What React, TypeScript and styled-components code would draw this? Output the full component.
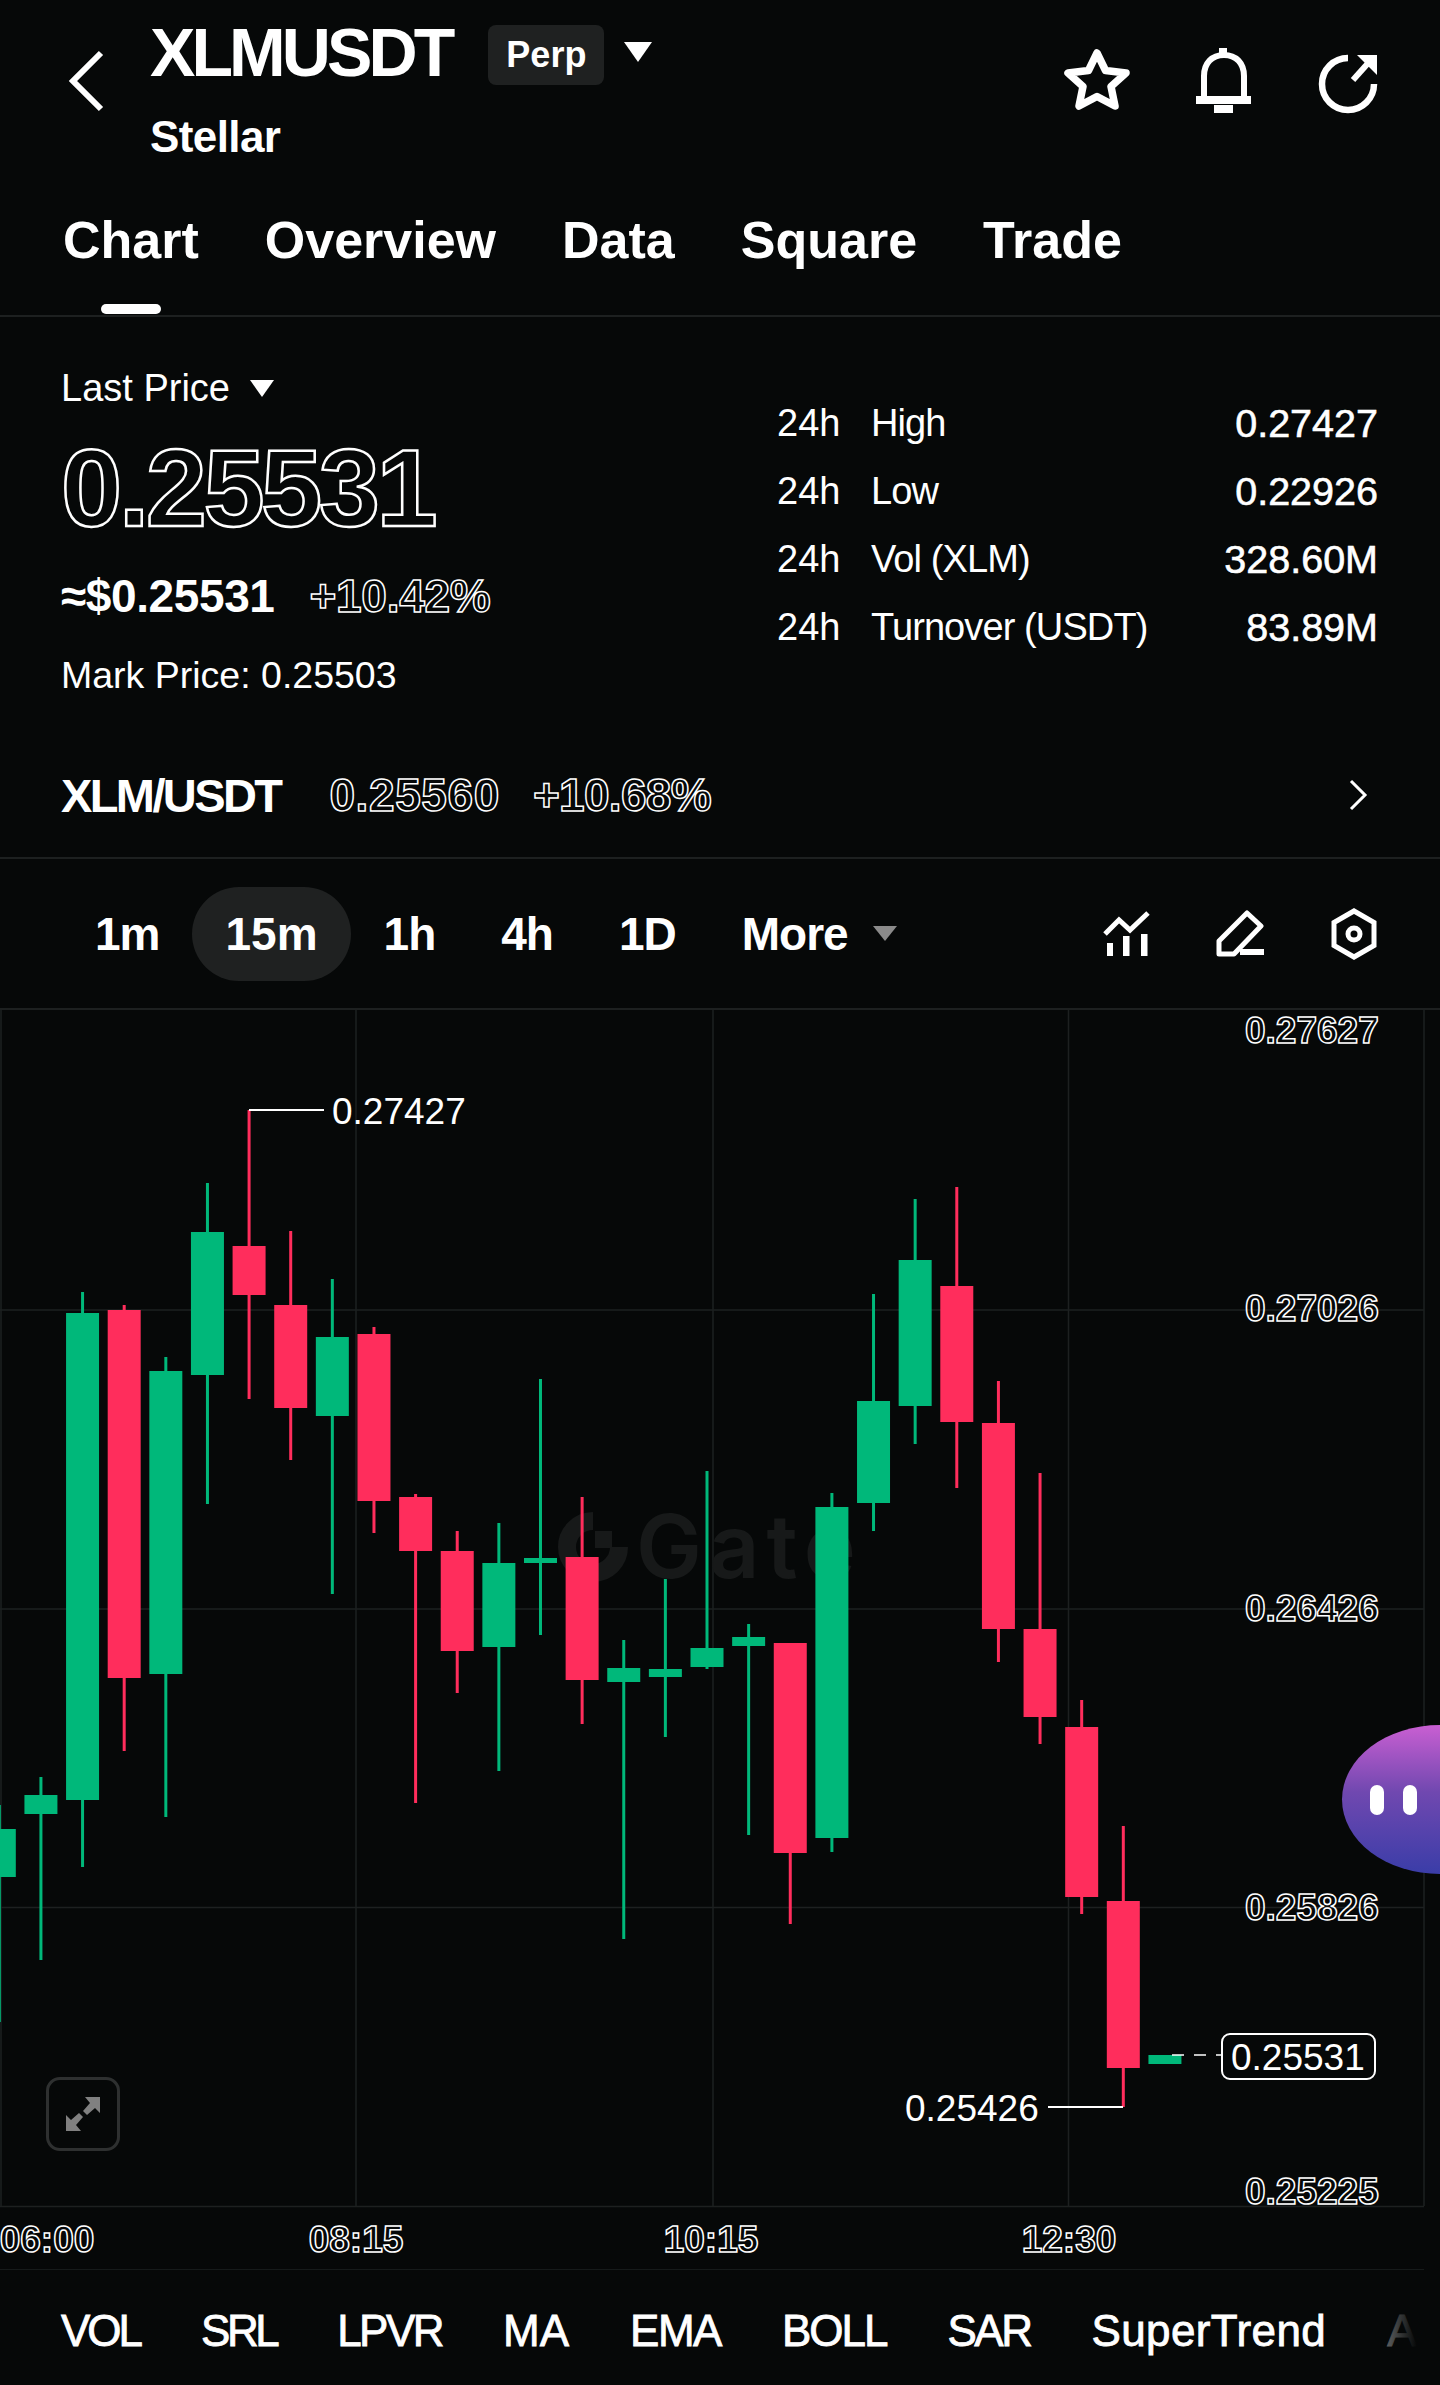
import styled, { createGlobalStyle } from "styled-components";

const BG = "#060808";
const LINE = "#1d2020";
const GREEN = "#00b87a";
const RED = "#ff2d5c";

// wick top, body top, body bottom, wick bottom, is green
const CANDLES: [number, number, number, number, boolean][] = [
  [1805, 1829, 1877, 2022, true],
  [1777, 1795, 1814, 1960, true],
  [1292, 1313, 1800, 1867, true],
  [1305, 1310, 1678, 1751, false],
  [1357, 1371, 1674, 1817, true],
  [1183, 1232, 1375, 1504, true],
  [1110, 1246, 1295, 1399, false],
  [1231, 1305, 1408, 1460, false],
  [1279, 1337, 1416, 1594, true],
  [1327, 1334, 1501, 1533, false],
  [1494, 1497, 1551, 1803, false],
  [1531, 1551, 1651, 1693, false],
  [1523, 1563, 1647, 1771, true],
  [1379, 1558, 1563, 1635, true],
  [1497, 1557, 1680, 1724, false],
  [1640, 1668, 1682, 1939, true],
  [1579, 1669, 1677, 1737, true],
  [1471, 1648, 1667, 1669, true],
  [1624, 1637, 1646, 1835, true],
  [1643, 1643, 1853, 1924, false],
  [1493, 1507, 1838, 1852, true],
  [1294, 1401, 1503, 1531, true],
  [1199, 1260, 1406, 1444, true],
  [1187, 1286, 1422, 1488, false],
  [1381, 1423, 1629, 1662, false],
  [1473, 1629, 1717, 1744, false],
  [1700, 1727, 1897, 1914, false],
  [1826, 1901, 2068, 2107, false],
  [2055, 2055, 2064, 2064, true],
];

const AXIS_PRICES: [string, number][] = [
  ["0.27627", 1029],
  ["0.27026", 1307],
  ["0.26426", 1607],
  ["0.25826", 1906],
  ["0.25225", 2190],
];

const TIMES: [string, number][] = [
  ["06:00", 47],
  ["08:15", 356],
  ["10:15", 711],
  ["12:30", 1069],
];

const STATS = [
  ["High", "0.27427"],
  ["Low", "0.22926"],
  ["Vol (XLM)", "328.60M"],
  ["Turnover (USDT)", "83.89M"],
];

const INTERVALS = ["1m", "15m", "1h", "4h", "1D"];

const INDICATORS: [string, number][] = [
  ["VOL", -3],
  ["SRL", -3.5],
  ["LPVR", -2.5],
  ["MA", 0],
  ["EMA", -1.5],
  ["BOLL", -2],
  ["SAR", -2.5],
  ["SuperTrend", 0.4],
  ["A", 0],
];

export default function App() {
  return (
    <Page>
      <GlobalStyle />
      <Header>
        <TopBar>
          <BackIcon width="36" height="62" viewBox="0 0 36 62">
            <path d="M33 3 L5 31 L33 59" fill="none" stroke="#fff" strokeWidth="6" />
          </BackIcon>
          <TitleBlock>
            <TitleRow>
              <Title>XLMUSDT</Title>
              <Tag>Perp</Tag>
              <Triangle $w={14} $h={20} $color="#fff" />
            </TitleRow>
            <Subtitle>Stellar</Subtitle>
          </TitleBlock>
          <TopIcons>
            <svg width="66" height="64" viewBox="0 0 66 64">
              <path
                d="M33 5 L41.5 22.5 L62 25 L47 38.5 L51 58 L33 48.5 L15 58 L19 38.5 L4 25 L24.5 22.5 Z"
                fill="none"
                stroke="#fff"
                strokeWidth="7.5"
                strokeLinejoin="round"
              />
            </svg>
            <svg width="64" height="66" viewBox="0 0 64 66">
              <path
                d="M13 48 V28 C13 15 21 7 33 7 C45 7 53 15 53 28 V48"
                fill="none"
                stroke="#fff"
                strokeWidth="6"
              />
              <rect x="5" y="48" width="55" height="8" fill="#fff" />
              <rect x="23" y="57" width="19" height="8" fill="#fff" />
              <rect x="28" y="0" width="8" height="8" fill="#fff" />
            </svg>
            <svg width="64" height="66" viewBox="0 0 64 66">
              <path d="M32 10 A26 26 0 1 0 58 36" fill="none" stroke="#fff" strokeWidth="6.5" />
              <path d="M37 32 L54 13" fill="none" stroke="#fff" strokeWidth="6" />
              <path d="M41 7 H61 V27 Z" fill="#fff" />
            </svg>
          </TopIcons>
        </TopBar>
        <Tabs>
          <Tab $active>Chart</Tab>
          <Tab>Overview</Tab>
          <Tab>Data</Tab>
          <Tab>Square</Tab>
          <Tab>Trade</Tab>
        </Tabs>
      </Header>

      <Summary>
        <SummaryTop>
          <PriceColumn>
            <LastPrice>
              Last Price
              <Triangle $w={12} $h={17} $color="#fff" />
            </LastPrice>
            <BigPrice>0.25531</BigPrice>
            <SubPrice>
              <FiatPrice>≈$0.25531</FiatPrice>
              <OutlineChange $spacing={-0.3}>+10.42%</OutlineChange>
            </SubPrice>
            <MarkPrice>Mark Price: 0.25503</MarkPrice>
          </PriceColumn>
          <StatsColumn>
            {STATS.map(([label, value]) => (
              <StatRow key={label}>
                <span>24h</span>
                <StatLabel>{label}</StatLabel>
                <StatValue>{value}</StatValue>
              </StatRow>
            ))}
          </StatsColumn>
        </SummaryTop>
        <SpotRow>
          <SpotName>XLM/USDT</SpotName>
          <OutlineChange $spacing={0.6}>0.25560</OutlineChange>
          <OutlineChange $spacing={-0.7}>+10.68%</OutlineChange>
          <SpotArrow width="20" height="32" viewBox="0 0 20 32">
            <path d="M3 2 L17 16 L3 30" fill="none" stroke="#fff" strokeWidth="3" />
          </SpotArrow>
        </SpotRow>
      </Summary>

      <Toolbar>
        {INTERVALS.map((item) => (
          <Interval key={item} $active={item === "15m"}>
            {item}
          </Interval>
        ))}
        <Interval>
          More
          <Triangle $w={12} $h={15} $color="#8a8a8a" />
        </Interval>
        <ToolIcons>
          <svg width="48" height="48" viewBox="0 0 48 48">
            <path d="M3 24 L17 10 L28 20 L46 3" fill="none" stroke="#fff" strokeWidth="5" />
            <rect x="5" y="33" width="6" height="13" fill="#fff" />
            <rect x="21" y="26" width="6.5" height="20" fill="#fff" />
            <rect x="39" y="24" width="6.5" height="22" fill="#fff" />
          </svg>
          <svg width="48" height="48" viewBox="0 0 48 48">
            <path
              d="M3 44 V31 L31 3 L45 16 L18 44 Z"
              fill="none"
              stroke="#fff"
              strokeWidth="5"
              strokeLinejoin="round"
            />
            <rect x="24" y="39" width="24" height="6" fill="#fff" />
          </svg>
          <svg width="48" height="52" viewBox="0 0 48 52">
            <path
              d="M24 3 L44 14.5 L44 37.5 L24 49 L4 37.5 L4 14.5 Z"
              fill="none"
              stroke="#fff"
              strokeWidth="5"
            />
            <circle cx="24" cy="26" r="6" fill="none" stroke="#fff" strokeWidth="5" />
          </svg>
        </ToolIcons>
      </Toolbar>

      <ChartWrap>
        <svg width="1440" height="1260" viewBox="0 1010 1440 1260" style={{ display: "block" }}>
          {[1310, 1609, 1907.5, 2206.5].map((y) => (
            <line key={y} x1="0" x2="1424" y1={y} y2={y} stroke={LINE} strokeWidth="1.5" />
          ))}
          {[1, 356, 713, 1068.5, 1424].map((x) => (
            <line key={x} x1={x} x2={x} y1="1010" y2="2206" stroke={LINE} strokeWidth="1.5" />
          ))}
          <line x1="0" x2="1424" y1="2270" y2="2270" stroke={LINE} strokeWidth="1.5" />

          <path d="M593 1521 A26 26 0 1 0 619 1547" fill="none" stroke="#171919" strokeWidth="18" />
          <rect x="595" y="1531" width="17" height="17" fill="#171919" />
          <Watermark x="636" y="1578">
            Gate
          </Watermark>

          {CANDLES.map(([wickTop, top, bottom, wickBottom, up], i) => {
            const cx = -0.7 + 41.63 * i;
            const color = up ? GREEN : RED;
            return (
              <g key={i} fill={color}>
                <rect x={cx - 1.5} y={wickTop} width="3" height={wickBottom - wickTop} />
                <rect x={cx - 16.5} y={top} width="33" height={bottom - top} />
              </g>
            );
          })}

          <line x1="249" x2="324" y1="1110" y2="1110" stroke="#fff" strokeWidth="2" />
          <ChartLabel x="332" y="1124">
            0.27427
          </ChartLabel>
          <line x1="1048" x2="1123" y1="2107" y2="2107" stroke="#fff" strokeWidth="2" />
          <ChartLabel x="905" y="2121">
            0.25426
          </ChartLabel>

          <line
            x1="1172"
            x2="1221"
            y1="2055"
            y2="2055"
            stroke="#fff"
            strokeWidth="1.5"
            strokeDasharray="12 10"
          />
          <rect x="1222" y="2034" width="153" height="45" rx="8" fill={BG} stroke="#fff" strokeWidth="2" />
          <ChartLabel x="1231" y="2070">
            0.25531
          </ChartLabel>

          {AXIS_PRICES.map(([label, y]) => (
            <AxisLabel key={label} x="1245" y={y + 14}>
              {label}
            </AxisLabel>
          ))}
          {TIMES.map(([label, x]) => (
            <AxisLabel key={label} x={x} y="2252" textAnchor="middle">
              {label}
            </AxisLabel>
          ))}
        </svg>

        <ExpandButton>
          <svg width="34" height="34" viewBox="0 0 34 34">
            <path d="M19 0 H34 V16 L29 11 L21 18 L17 14 L24 6 Z" fill="#808080" />
            <path d="M15 34 H0 V18 L5 23 L13 16 L17 20 L10 28 Z" fill="#808080" />
          </svg>
        </ExpandButton>
        <Bubble>
          <Eye />
          <Eye />
        </Bubble>
      </ChartWrap>

      <IndicatorRow>
        {INDICATORS.map(([name, spacing]) => (
          <Indicator key={name} $spacing={spacing}>
            {name}
          </Indicator>
        ))}
      </IndicatorRow>
    </Page>
  );
}

const GlobalStyle = createGlobalStyle`
  html, body {
    margin: 0;
    background: ${BG};
  }
  body {
    font-family: "Liberation Sans", Arial, sans-serif;
    color: #fff;
  }
`;

const Page = styled.div`
  width: 1440px;
  height: 2385px;
  overflow: hidden;
  background: ${BG};
`;

const Header = styled.header`
  box-sizing: border-box;
  height: 317px;
  padding-top: 18px;
  border-bottom: 2px solid ${LINE};
`;

const TopBar = styled.div`
  display: flex;
  align-items: flex-start;
  padding: 0 60px 0 68px;
`;

const BackIcon = styled.svg`
  margin: 32px 46px 0 0;
`;

const TitleBlock = styled.div`
  display: flex;
  flex-direction: column;
`;

const TitleRow = styled.div`
  display: flex;
  align-items: center;
  height: 68px;
`;

const Title = styled.h1`
  margin: 0;
  font-size: 68px;
  line-height: 68px;
  font-weight: 700;
  letter-spacing: -3.9px;
`;

const Tag = styled.span`
  margin: 5px 20px 0 37px;
  padding: 0 18px;
  height: 60px;
  line-height: 60px;
  border-radius: 8px;
  background: #1f2121;
  font-size: 36px;
  font-weight: 700;
`;

const Triangle = styled.i<{ $w: number; $h: number; $color: string }>`
  display: inline-block;
  width: 0;
  height: 0;
  border-left: ${(p) => p.$w}px solid transparent;
  border-right: ${(p) => p.$w}px solid transparent;
  border-top: ${(p) => p.$h}px solid ${(p) => p.$color};
`;

const Subtitle = styled.div`
  margin-top: 28px;
  font-size: 44px;
  line-height: 46px;
  font-weight: 700;
  letter-spacing: -0.6px;
`;

const TopIcons = styled.div`
  display: flex;
  gap: 61px;
  align-items: flex-start;
  margin: 30px 0 0 auto;
`;

const Tabs = styled.nav`
  display: flex;
  gap: 66px;
  margin-top: 50px;
  padding-left: 63px;
`;

const Tab = styled.div<{ $active?: boolean }>`
  position: relative;
  height: 104px;
  font-size: 52px;
  line-height: 60px;
  font-weight: 700;

  ${(p) =>
    p.$active &&
    `
    &::after {
      content: "";
      position: absolute;
      left: 50%;
      bottom: 0;
      width: 60px;
      height: 10px;
      margin-left: -30px;
      border-radius: 5px;
      background: #fff;
    }
  `}
`;

const Summary = styled.section`
  box-sizing: border-box;
  height: 542px;
  padding-top: 49px;
  border-bottom: 2px solid ${LINE};
`;

const SummaryTop = styled.div`
  display: flex;
  justify-content: space-between;
  padding: 0 62px 0 61px;
`;

const PriceColumn = styled.div`
  display: flex;
  flex-direction: column;
`;

const LastPrice = styled.div`
  display: flex;
  align-items: center;
  gap: 20px;
  font-size: 38px;
  line-height: 44px;
`;

const BigPrice = styled.div`
  margin-top: 21px;
  font-size: 110px;
  line-height: 113px;
  font-weight: 700;
  letter-spacing: -3.5px;
  color: transparent;
  -webkit-text-stroke: 2.5px #fff;
`;

const SubPrice = styled.div`
  display: flex;
  gap: 35px;
  margin-top: 29px;
`;

const FiatPrice = styled.span`
  font-size: 46px;
  line-height: 46px;
  font-weight: 700;
  letter-spacing: -0.4px;
`;

const OutlineChange = styled.span<{ $spacing: number }>`
  font-size: 46px;
  line-height: 46px;
  font-weight: 700;
  letter-spacing: ${(p) => p.$spacing}px;
  color: transparent;
  -webkit-text-stroke: 1.5px #fff;
`;

const MarkPrice = styled.div`
  margin-top: 34px;
  font-size: 37.5px;
  line-height: 44px;
`;

const StatsColumn = styled.div`
  display: flex;
  flex-direction: column;
  gap: 24px;
  width: 601px;
  margin-top: 35px;
`;

const StatRow = styled.div`
  display: grid;
  grid-template-columns: 94px 1fr auto;
  font-size: 38px;
  line-height: 44px;
`;

const StatLabel = styled.span`
  letter-spacing: -0.9px;
`;

const StatValue = styled.span`
  font-size: 39.5px;
  -webkit-text-stroke: 0.6px #fff;
`;

const SpotRow = styled.div`
  display: flex;
  align-items: center;
  gap: 33px;
  height: 50px;
  margin-top: 73px;
  padding: 0 72px 0 61px;
`;

const SpotName = styled.span`
  margin-right: 16px;
  font-size: 47px;
  font-weight: 700;
  letter-spacing: -2.6px;
`;

const SpotArrow = styled.svg`
  margin-left: auto;
`;

const Toolbar = styled.div`
  box-sizing: border-box;
  display: flex;
  align-items: center;
  height: 151px;
  padding: 0 62px;
  border-bottom: 2px solid ${LINE};
`;

const Interval = styled.div<{ $active?: boolean }>`
  display: flex;
  align-items: center;
  gap: 25px;
  height: 94px;
  padding: 0 33px;
  border-radius: 47px;
  background: ${(p) => (p.$active ? "#1f2121" : "transparent")};
  font-size: 46px;
  font-weight: 700;
  letter-spacing: ${(p) => (p.$active ? "0" : "-1px")};
`;

const ToolIcons = styled.div`
  display: flex;
  align-items: center;
  gap: 66px;
  margin-left: auto;
`;

const ChartWrap = styled.div`
  position: relative;
  height: 1260px;
`;

const Watermark = styled.text`
  font-family: Inter, "Liberation Sans", sans-serif;
  font-size: 88px;
  font-weight: 600;
  letter-spacing: 7px;
  fill: #171919;
`;

const ChartLabel = styled.text`
  font-family: "Liberation Sans", Arial, sans-serif;
  font-size: 37px;
  fill: #fff;
`;

const AxisLabel = styled.text`
  font-family: "Liberation Sans", Arial, sans-serif;
  font-size: 37px;
  font-weight: 700;
  fill: transparent;
  stroke: #fff;
  stroke-width: 1.5px;
`;

const ExpandButton = styled.button`
  position: absolute;
  left: 46px;
  top: 1067px;
  box-sizing: border-box;
  display: flex;
  align-items: center;
  justify-content: center;
  width: 74px;
  height: 74px;
  padding: 0;
  background: transparent;
  border: 3px solid #2e3030;
  border-radius: 14px;
`;

const Bubble = styled.div`
  position: absolute;
  right: 0;
  top: 715px;
  display: flex;
  align-items: center;
  gap: 19px;
  box-sizing: border-box;
  width: 98px;
  height: 149px;
  padding-left: 28px;
  border-radius: 100% 0 0 100% / 50% 0 0 50%;
  background: linear-gradient(180deg, #c95fd2 0%, #7048b0 45%, #3a3da8 100%);
`;

const Eye = styled.span`
  width: 14px;
  height: 30px;
  border-radius: 7px;
  background: #fff;
`;

const IndicatorRow = styled.div`
  position: relative;
  box-sizing: border-box;
  display: flex;
  align-items: center;
  gap: 61px;
  height: 115px;
  padding: 6px 0 0 61px;
  overflow: hidden;

  &::after {
    content: "";
    position: absolute;
    top: 0;
    bottom: 0;
    right: 0;
    width: 58px;
    background: linear-gradient(90deg, rgba(6, 8, 8, 0.6) 0%, ${BG} 60%);
  }
`;

const Indicator = styled.span<{ $spacing: number }>`
  flex: none;
  font-size: 44px;
  letter-spacing: ${(p) => p.$spacing}px;
  -webkit-text-stroke: 0.8px #fff;
`;
